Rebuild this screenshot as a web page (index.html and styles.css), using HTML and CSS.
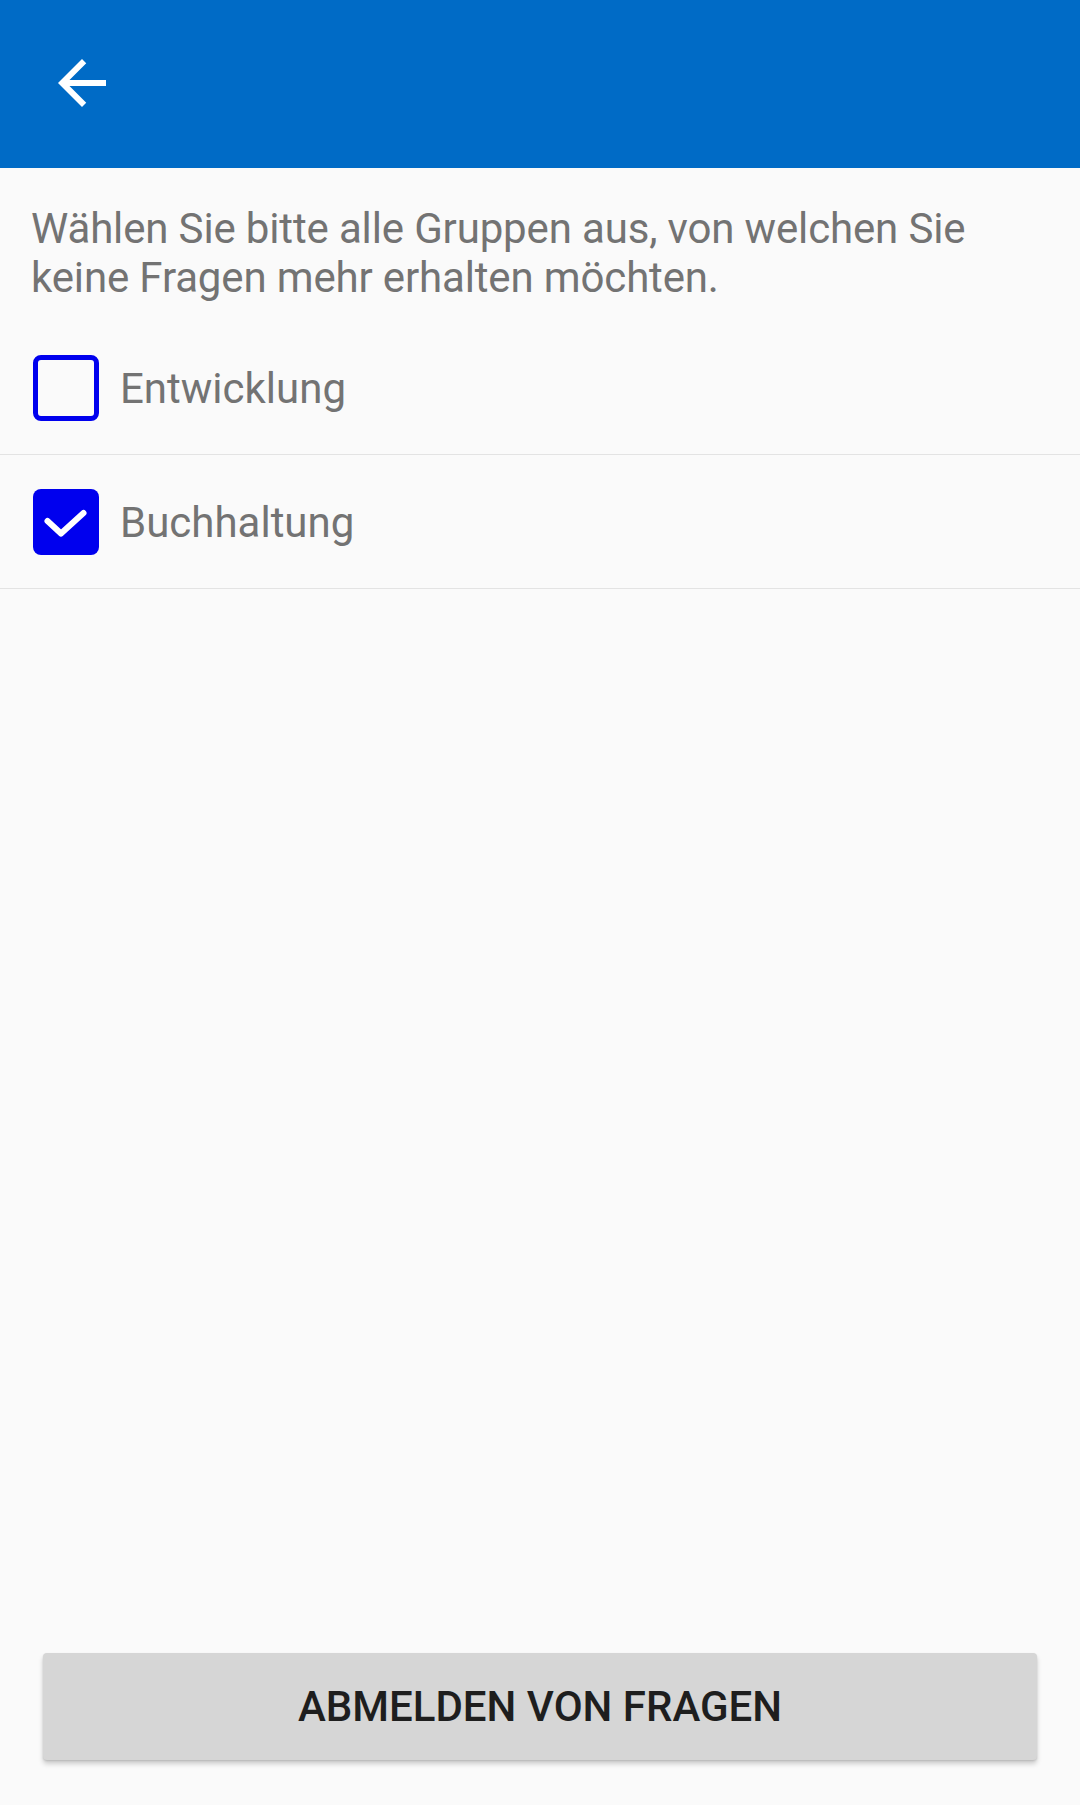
FILE: index.html
```html
<!DOCTYPE html>
<html lang="de">
<head>
<meta charset="utf-8">
<title>Gruppen abmelden</title>
<link rel="stylesheet" href="styles.css">
</head>
<body>
<div class="screen">
  <header class="appbar">
    <button class="back" aria-label="Zurück">
      <svg viewBox="0 0 24 24" width="72" height="72"><path fill="#ffffff" d="M20 11H7.83l5.59-5.59L12 4l-8 8 8 8 1.41-1.41L7.83 13H20v-2z"/></svg>
    </button>
  </header>
  <p class="intro">Wählen Sie bitte alle Gruppen aus, von welchen Sie keine Fragen mehr erhalten möchten.</p>
  <ul class="groups">
    <li class="row">
      <span class="box"></span>
      <span class="label">Entwicklung</span>
    </li>
    <li class="row">
      <span class="box checked">
        <svg viewBox="0 0 66 66" width="66" height="66"><polyline points="14.5,32 28,44.5 50.5,24" fill="none" stroke="#ffffff" stroke-width="6" stroke-linecap="round" stroke-linejoin="round"/></svg>
      </span>
      <span class="label">Buchhaltung</span>
    </li>
  </ul>
  <div class="spacer"></div>
  <div class="actions">
    <button class="btn">ABMELDEN VON FRAGEN</button>
  </div>
</div>
</body>
</html>
```
FILE: styles.css
```css
html, body {
  margin: 0;
  padding: 0;
  background: #fafafa;
}
.screen {
  width: 1080px;
  height: 1805px;
  display: flex;
  flex-direction: column;
  font-family: Roboto, "Liberation Sans", sans-serif;
  background: #fafafa;
}
.appbar {
  height: 168px;
  background: #006bc6;
  display: flex;
  align-items: flex-start;
  padding: 47px 0 0 46px;
  box-sizing: border-box;
  flex: none;
}
.back {
  border: 0;
  padding: 0;
  margin: 0;
  background: transparent;
  width: 72px;
  height: 72px;
  display: block;
}
.back svg { display: block; }
.intro {
  margin: 36px 40px 19px 31px;
  font-size: 42px;
  line-height: 49px;
  letter-spacing: -0.15px;
  color: #737373;
}
.groups {
  list-style: none;
  margin: 0;
  padding: 0;
}
.row {
  height: 133px;
  display: flex;
  align-items: center;
  border-bottom: 1px solid #e3e3e3;
}
.box {
  flex: none;
  width: 66px;
  height: 66px;
  box-sizing: border-box;
  margin-left: 33px;
  border: 5px solid #0000ee;
  border-radius: 8px;
  position: relative;
}
.box.checked {
  background: #0000ee;
  border: 0;
}
.box svg { display: block; }
.label {
  margin-left: 21px;
  font-size: 42px;
  color: #737373;
  padding-top: 2px;
}
.spacer { flex: 1; }
.actions {
  padding: 0 43px 45px;
}
.btn {
  display: block;
  width: 100%;
  height: 107px;
  border: 0;
  border-radius: 4px;
  background: #d6d6d6;
  box-shadow: 0 4px 5px rgba(0,0,0,0.18), 0 1px 2px rgba(0,0,0,0.12);
  font-family: Roboto, "Liberation Sans", sans-serif;
  font-weight: 500;
  font-size: 42px;
  color: #1e1e1e;
  padding: 0;
}
```
